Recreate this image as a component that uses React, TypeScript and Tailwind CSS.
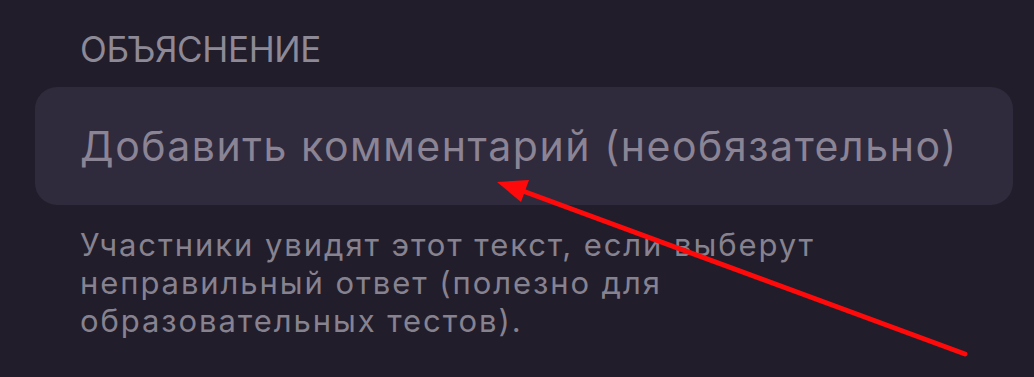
import React from 'react';

const App = () => {
    return (
        <div
            className="relative w-[1034px] h-[377px] overflow-hidden bg-[#211d2b] pl-[35px] pr-[21px]"
            style={{ fontFamily: 'Inter, "Noto Sans", sans-serif' }}
        >
            <div className="pt-[29px] pl-[45px] text-[35px] leading-[40px] tracking-[-0.01em] text-[#8d8996]">
                ОБЪЯСНЕНИЕ
            </div>

            <div className="mt-[18px] h-[118px] rounded-[22px] bg-[#302a3d] flex items-center pl-[45px]">
                <span className="text-[41px] leading-none text-[#8a8495] tracking-[0.038em]">
                    Добавить комментарий (необязательно)
                </span>
            </div>

            <p className="mt-[21px] pl-[45px] w-[810px] text-[31px] leading-[38px] tracking-[0.062em] text-[#87828f]">
                Участники увидят этот текст, если выберут неправильный ответ (полезно для образовательных тестов).
            </p>

            <svg className="absolute inset-0 pointer-events-none" width="1034" height="377" viewBox="0 0 1034 377">
                <line x1="965" y1="354" x2="512" y2="187" stroke="#ff0a0a" strokeWidth="5" strokeLinecap="round" />
                <polygon points="497,182 529,180 521,202" fill="#ff0a0a" />
            </svg>
        </div>
    );
};

export default App;
